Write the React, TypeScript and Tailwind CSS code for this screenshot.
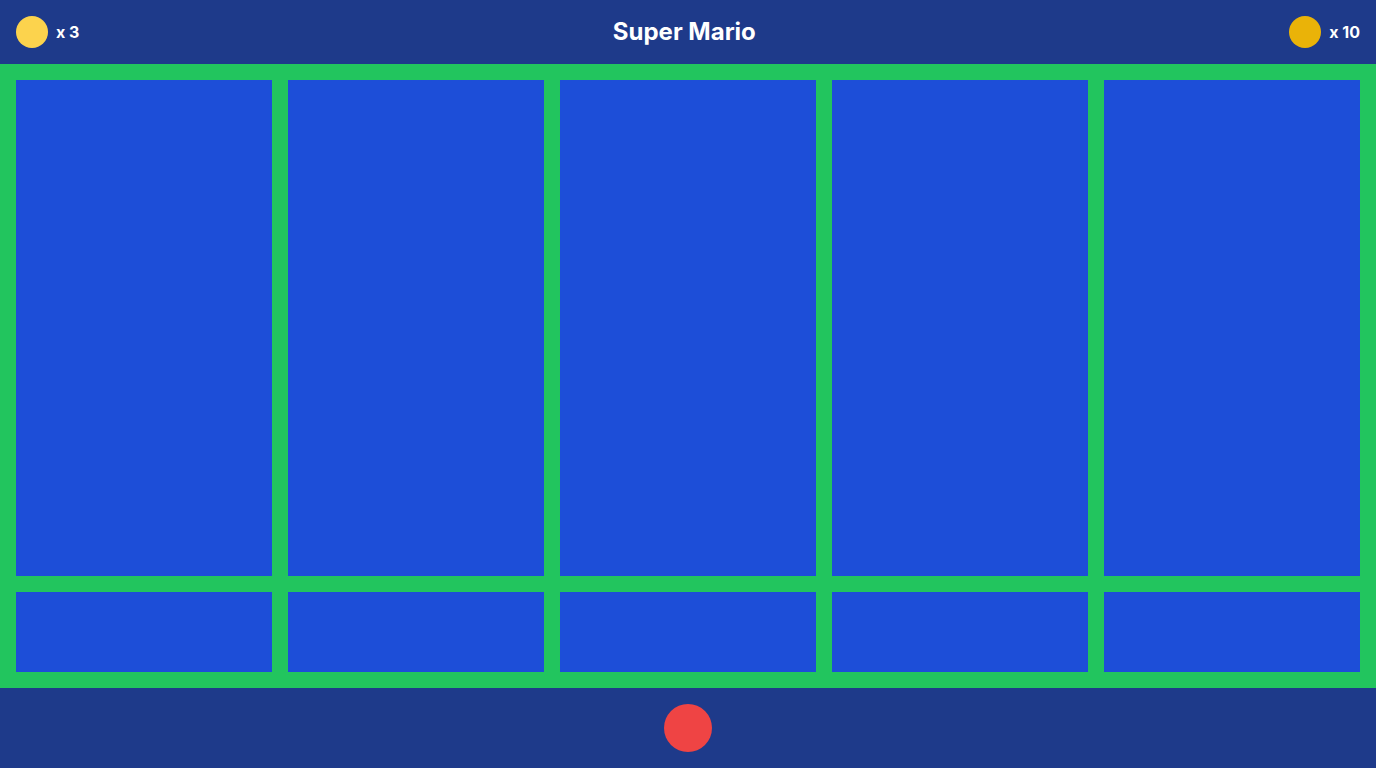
import React from "react";

const Coin = ({ color, count }: { color: string; count: string }) => (
  <div className="flex items-center gap-2">
    <div className={`h-8 w-8 rounded-full ${color}`} />
    <span className="text-base font-bold text-white">{count}</span>
  </div>
);

export default function App() {
  const cols = Array.from({ length: 5 });
  return (
    <div className="flex h-[768px] w-full flex-col bg-[#1e3a8a] font-['Inter',sans-serif]">
      <header className="flex h-16 items-center justify-between px-4">
        <Coin color="bg-[#fcd34d]" count="x 3" />
        <h1 className="text-2xl font-bold text-white">Super Mario</h1>
        <Coin color="bg-[#eab308]" count="x 10" />
      </header>
      <main className="flex flex-1 flex-col gap-4 bg-[#22c55e] p-4">
        <div className="grid flex-1 grid-cols-5 gap-4">
          {cols.map((_, i) => (
            <div key={i} className="bg-[#1d4ed8]" />
          ))}
        </div>
        <div className="grid h-20 grid-cols-5 gap-4">
          {cols.map((_, i) => (
            <div key={i} className="bg-[#1d4ed8]" />
          ))}
        </div>
      </main>
      <footer className="flex h-20 items-center justify-center">
        <div className="h-12 w-12 rounded-full bg-[#ef4444]" />
      </footer>
    </div>
  );
}
